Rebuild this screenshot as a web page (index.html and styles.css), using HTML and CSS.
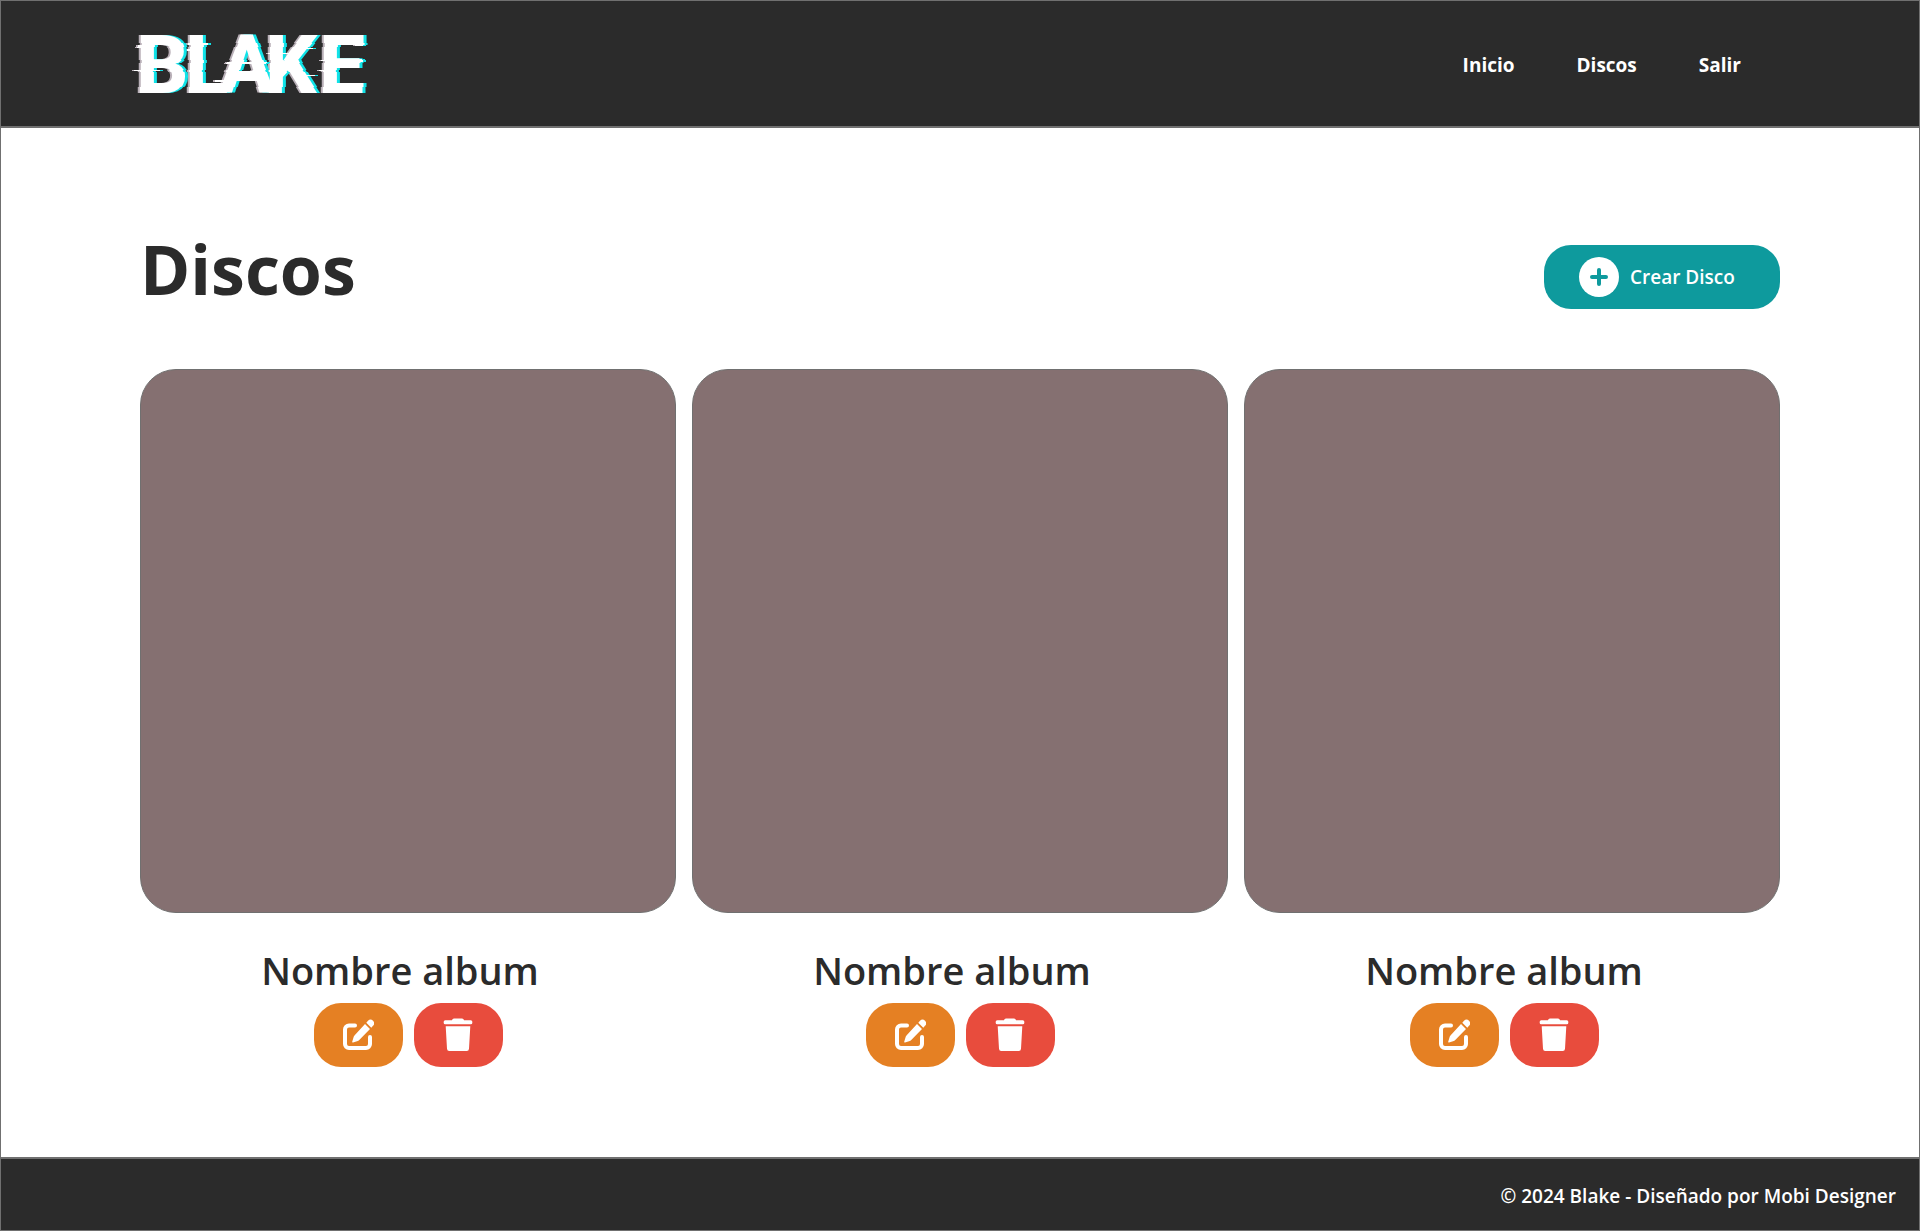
FILE: index.html
```html
<!DOCTYPE html>
<html lang="es">
<head>
<meta charset="utf-8">
<title>Blake - Discos</title>
<meta name="viewport" content="width=device-width, initial-scale=1">
<link rel="stylesheet" href="styles.css">
</head>
<body>
<svg class="sprite" aria-hidden="true">
  <symbol id="icon-plus" viewBox="0 0 40 40">
    <circle cx="20" cy="20" r="20" fill="#fff"/>
    <path d="M20 13v14M13 20h14" stroke="#0e9a9d" stroke-width="4" stroke-linecap="round"/>
  </symbol>
  <symbol id="icon-edit" viewBox="0 0 32 34">
    <path d="M13 7.500H7a4 4 0 0 0-4 4v14.500a4 4 0 0 0 4 4h17a4 4 0 0 0 4-4v-7" fill="none" stroke="#fff" stroke-width="4" stroke-linecap="round"/>
    <path d="M23 6l5 5-10.500 10.800q-1 1-2.500 1.500l-4 1.200q-1 .2-.8-.8l1.200-4q.4-1.400 1.300-2.400z" fill="#fff"/>
    <path d="M24.300 4.700l1.700-1.900a3.400 3.400 0 0 1 5 5l-1.700 1.900z" fill="#fff"/>
  </symbol>
  <symbol id="icon-trash" viewBox="0 0 30 34">
    <path d="M2.200 2.300H9q.3-1.800 2-1.800h8q1.700 0 2 1.800h6.800q1.500 0 1.500 1.500V5q0 1.300-1.500 1.300H2.200Q.7 6.300.7 5V3.800q0-1.500 1.500-1.500zM2.700 8.300h24.600l-1.300 22.500q-.2 2.200-2.200 2.200H6.200q-2 0-2.200-2.200z" fill="#fff"/>
  </symbol>
</svg>
<div class="page">
  <header class="header">
    <a class="logo" href="#" aria-label="Blake">
      <svg class="logo-art" viewBox="0 0 240 99">
        <!-- Shifts horizontal bands of the word, then adds the grey and cyan fringes -->
        <filter id="glitch" filterUnits="userSpaceOnUse" primitiveUnits="userSpaceOnUse" x="0" y="0" width="240" height="99" color-interpolation-filters="sRGB">
          <feOffset in="SourceGraphic" dx="0" x="0" y="0" width="240" height="29" result="a"/>
          <feOffset in="SourceGraphic" dx="1" x="0" y="29" width="240" height="4" result="b"/>
          <feOffset in="SourceGraphic" dx="0" x="0" y="33" width="240" height="13" result="c"/>
          <feOffset in="SourceGraphic" dx="1" x="0" y="46" width="240" height="3" result="d"/>
          <feOffset in="SourceGraphic" dx="0" x="0" y="49" width="240" height="7" result="e"/>
          <feOffset in="SourceGraphic" dx="-1" x="0" y="56" width="240" height="2" result="f"/>
          <feOffset in="SourceGraphic" dx="0" x="0" y="58" width="240" height="15" result="g"/>
          <feOffset in="SourceGraphic" dx="-1" x="0" y="73" width="240" height="26" result="h"/>
          <feMerge result="face">
            <feMergeNode in="a"/><feMergeNode in="b"/><feMergeNode in="c"/><feMergeNode in="d"/>
            <feMergeNode in="e"/><feMergeNode in="f"/><feMergeNode in="g"/><feMergeNode in="h"/>
          </feMerge>
          <feFlood flood-color="#b9b0b8"/>
          <feComposite in2="face" operator="in"/>
          <feOffset dx="-2" result="shade"/>
          <feFlood flood-color="#10e3e8"/>
          <feComposite in2="face" operator="in"/>
          <feOffset dx="3" result="glow"/>
          <feMerge>
            <feMergeNode in="shade"/><feMergeNode in="glow"/><feMergeNode in="face"/>
          </feMerge>
        </filter>
        <g filter="url(#glitch)">
          <text class="logo-type" x="4 53 87 133 187" y="79">BLAKE</text>
          <path d="M3 56h26v1H3zM5 31h4v3H5zM55 29h20v2H55zM55 35h10v2H55zM94 48h40v2H94zM83 66h20v2H83zM136 39h22v1h-22zM165 34h16v1h-16zM165 61h18v1h-18zM188 56h12v1h-12zM188 46h4v1h-4zM222 30h8v2h-8zM222 45h8v3h-8zM214 70h16v1h-16z" fill="#fff"/>
        </g>
      </svg>
    </a>
    <nav class="nav">
      <a href="#">Inicio</a>
      <a href="#">Discos</a>
      <a href="#">Salir</a>
    </nav>
  </header>
  <main class="main">
    <div class="heading">
      <h1 class="title">Discos</h1>
      <button class="button button-create" type="button"><svg class="icon-plus"><use href="#icon-plus"/></svg>Crear Disco</button>
    </div>
    <div class="albums">
      <article class="album">
        <div class="cover"></div>
        <h2 class="name">Nombre album</h2>
        <div class="actions">
          <button class="button button-edit" type="button" aria-label="Editar"><svg class="icon"><use href="#icon-edit"/></svg></button>
          <button class="button button-delete" type="button" aria-label="Eliminar"><svg class="icon"><use href="#icon-trash"/></svg></button>
        </div>
      </article>
      <article class="album">
        <div class="cover"></div>
        <h2 class="name">Nombre album</h2>
        <div class="actions">
          <button class="button button-edit" type="button" aria-label="Editar"><svg class="icon"><use href="#icon-edit"/></svg></button>
          <button class="button button-delete" type="button" aria-label="Eliminar"><svg class="icon"><use href="#icon-trash"/></svg></button>
        </div>
      </article>
      <article class="album">
        <div class="cover"></div>
        <h2 class="name">Nombre album</h2>
        <div class="actions">
          <button class="button button-edit" type="button" aria-label="Editar"><svg class="icon"><use href="#icon-edit"/></svg></button>
          <button class="button button-delete" type="button" aria-label="Eliminar"><svg class="icon"><use href="#icon-trash"/></svg></button>
        </div>
      </article>
    </div>
  </main>
  <footer class="footer">© 2024 Blake - Diseñado por Mobi Designer</footer>
</div>
</body>
</html>
```

FILE: styles.css
```css
* { box-sizing: border-box; }
body {
  margin: 0;
  background: #fff;
  color: #2b2b2b;
  font-family: "Segoe UI", "Open Sans", sans-serif;
  font-weight: 600;
}
.sprite { display: none; }
.page {
  display: flex;
  flex-direction: column;
  min-height: 100vh;
  border: 1px solid #707070;
}
.header {
  display: flex;
  align-items: center;
  justify-content: space-between;
  height: 127px;
  padding: 0 178px 0 131px;
  background: #2b2b2b;
  border-bottom: 2px solid #707070;
}
.logo { display: block; }
.logo-art { display: block; width: 240px; height: 99px; }
.logo-type { font: 800 82px Roboto, sans-serif; fill: #fff; }
.nav { display: flex; gap: 62px; padding-top: 2px; }
.nav a {
  color: #fff;
  font-size: 19px;
  font-weight: 700;
  line-height: 28px;
  text-decoration: none;
}
.main { flex: 1; padding: 101px 139px 88px; }
.heading {
  display: flex;
  align-items: flex-end;
  justify-content: space-between;
  margin-bottom: 60px;
}
.title { margin: 0; font-size: 68px; font-weight: 700; line-height: 80px; }
.button {
  display: flex;
  align-items: center;
  justify-content: center;
  height: 64px;
  padding: 0;
  border: 0;
  border-radius: 27px;
  color: #fff;
  font: inherit;
  cursor: pointer;
}
.button-create {
  justify-content: flex-start;
  gap: 11px;
  width: 236px;
  padding-left: 35px;
  background: #0e9a9d;
  font-size: 19px;
}
.icon-plus { width: 40px; height: 40px; }
.albums { display: grid; grid-template-columns: repeat(3, 1fr); gap: 16px; }
.cover {
  height: 544px;
  border: 1px solid #707070;
  border-radius: 36px;
  background: #857071;
}
.name {
  margin: 29px 0 5px;
  padding-right: 16px;
  font-size: 38px;
  font-weight: 600;
  line-height: 56px;
  text-align: center;
}
.actions { display: flex; justify-content: center; gap: 11px; }
.album:last-child .actions { padding-right: 16px; }
.button-edit { width: 89px; background: #e58023; }
.button-delete { width: 89px; background: #e84c3d; }
.icon { width: 32px; height: 34px; }
.footer {
  height: 73px;
  padding: 23px 23px 0;
  border-top: 2px solid #707070;
  background: #2b2b2b;
  color: #fff;
  font-size: 19px;
  line-height: 28px;
  text-align: right;
}
```
